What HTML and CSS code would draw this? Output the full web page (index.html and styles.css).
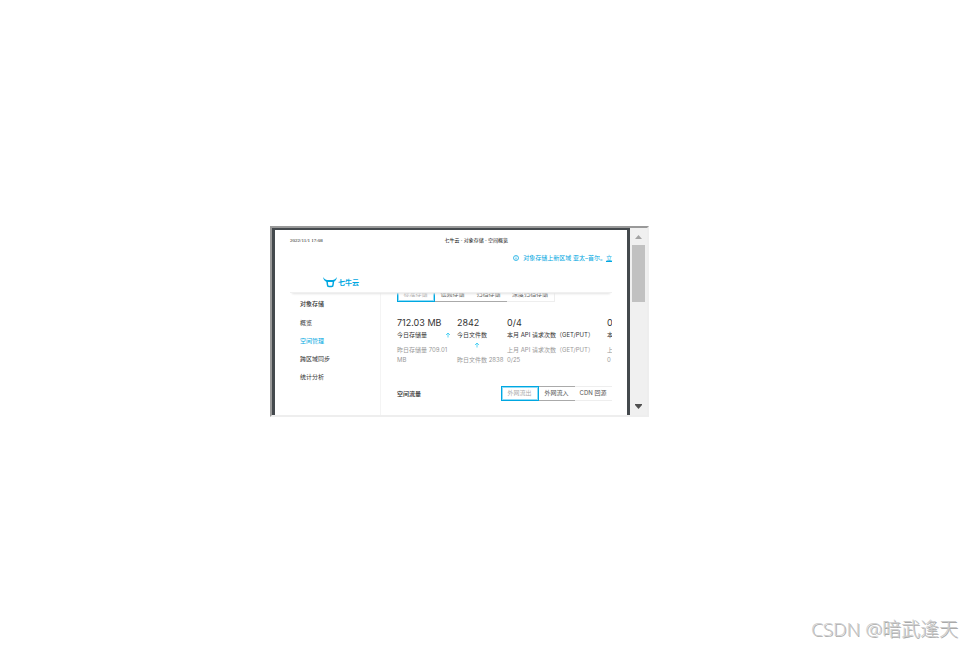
FILE: index.html
```html
<!DOCTYPE html>
<html lang="zh-CN">
<head>
<meta charset="utf-8">
<title>七牛云 - 对象存储 - 空间概览</title>
<link rel="stylesheet" href="styles.css">
</head>
<body>
<main class="stage">
  <div class="viewer">
    <div class="sheet">
      <div class="print-head">
        <time>2022/11/1 17:08</time>
        <span>七牛云 - 对象存储 - 空间概览</span>
      </div>
      <header class="top">
        <p class="notice">
          <svg class="notice-icon" viewBox="0 0 12 12"><circle cx="6" cy="6" r="5"/><path d="M6 5v4M6 3v1"/></svg>
          <span>对象存储上新区域 亚太–首尔。</span><a href="#">立</a>
        </p>
        <div class="brand">
          <svg class="brand-icon" viewBox="0 0 28 22"><path d="M0 0c3 5 7 6 11 6h6c4 0 8-1 11-6-1 6-4 9-9 10H9C4 9 1 6 0 0z"/><path class="face" d="M8 8l1 8q0 3 3 3h5q3 0 3-3l1-8"/></svg>
          <span>七牛云</span>
        </div>
      </header>
      <div class="body">
        <nav class="side">
          <h2>对象存储</h2>
          <a href="#">概览</a>
          <a href="#" class="current">空间管理</a>
          <a href="#">跨区域同步</a>
          <a href="#">统计分析</a>
        </nav>
        <section class="content">
          <div class="tabs tabs-cut">
            <button class="tab on">标准存储</button><button class="tab">低频存储</button><button class="tab">归档存储</button><button class="tab faint wide">深度归档存储</button>
          </div>
          <div class="stats">
            <div class="stat">
              <strong>712.03 MB</strong>
              <div class="label"><span>今日存储量</span><svg class="up" viewBox="0 0 12 12"><path d="M6 11V2M2 6l4-4 4 4"/></svg></div>
              <p>昨日存储量 709.01 MB</p>
            </div>
            <div class="stat">
              <strong>2842</strong>
              <div class="label stacked"><span>今日文件数</span><svg class="up" viewBox="0 0 12 12"><path d="M6 11V2M2 6l4-4 4 4"/></svg></div>
              <p class="single">昨日文件数 2838</p>
            </div>
            <div class="stat">
              <strong>0/4</strong>
              <div class="label"><span>本月 API 请求次数（GET/PUT）</span></div>
              <p>上月 API 请求次数（GET/PUT）<br>0/25</p>
            </div>
            <div class="stat">
              <strong>0</strong>
              <div class="label"><span>本</span></div>
              <p>上<br>0</p>
            </div>
          </div>
          <div class="traffic">
            <h3>空间流量</h3>
            <div class="tabs">
              <button class="tab on">外网流出</button><button class="tab">外网流入</button><button class="tab faint">CDN 回源</button>
            </div>
          </div>
        </section>
      </div>
    </div>
    <div class="scroll">
      <svg class="arrow" viewBox="0 0 17 17"><path d="M5 11h7L8.500 7z"/></svg>
      <div class="thumb"></div>
      <svg class="arrow down" viewBox="0 0 17 17"><path d="M5 6h7v1l-3.500 4L5 7z"/></svg>
    </div>
  </div>
</main>
<footer class="mark">CSDN @暗武逢天</footer>
</body>
</html>
```
FILE: styles.css
```css
* { box-sizing: border-box; }
body {
  margin: 0;
  min-height: 100vh;
  display: flex;
  flex-direction: column;
  background: #fff;
  color: #333;
  font: 6px/10px Inter, "Noto Sans CJK SC", sans-serif;
}
h2, h3, p { margin: 0; font-size: 6px; font-weight: 500; }
p { font-weight: 400; }
a { color: inherit; text-decoration: none; }
.stage { padding: 226px 0 0 270px; }
.viewer {
  display: flex;
  max-width: 379px;
  border: 2px solid;
  border-color: #999 #eee #eee #999;
  background: #f0f0f0;
}
.sheet {
  flex: 1;
  min-width: 0;
  background: #fff;
  border: solid #44494d;
  border-width: 2px 3px 0;
  padding: 6px 15px 0;
}
.print-head {
  display: grid;
  grid-template-columns: 48% 1fr;
  font: 5px/10px "Liberation Serif", "Noto Sans CJK SC", serif;
  color: #111;
}
.top {
  height: 47px;
  padding-top: 7px;
  border-bottom: 1px solid #f0f0f0;
  box-shadow: 0 3px 2px -2px #e4e4e4;
  color: #00a7e1;
  position: relative;
}
.notice { display: flex; justify-content: flex-end; align-items: center; white-space: nowrap; }
.notice a { text-decoration: underline; }
.notice-icon { width: 6px; height: 6px; margin-right: 4px; fill: none; stroke: currentColor; stroke-width: 1.500; }
.brand {
  display: flex;
  align-items: center;
  gap: 1px;
  margin: 14px 0 0 33px;
  font-size: 7px;
  font-weight: 700;
}
.brand-icon { width: 14px; height: 11px; fill: #00a7e1; }
.face { fill: none; stroke: #00a7e1; stroke-width: 3; }
.body { display: flex; height: 122px; overflow: hidden; }
.side {
  width: 91px;
  display: flex;
  flex-direction: column;
  gap: 8px;
  padding: 6px 0 0 10px;
  border-right: 1px solid #f4f4f4;
}
.side h2 { margin-bottom: 1px; }
.side .current { color: #00a7e1; }
.content {
  flex: 1;
  min-width: 0;
  margin-left: 6px;
  padding-left: 10px;
  overflow: hidden;
}
.tabs { display: flex; }
.tabs-cut { height: 9px; align-items: flex-end; overflow: hidden; }
.tab {
  width: 36px;
  height: 15px;
  padding: 0 1px 2px 0;
  flex: none;
  border: solid #aaa;
  border-width: 1px 0;
  background: #fff;
  color: #555;
  font: inherit;
  white-space: nowrap;
}
.tab.on { width: 38px; border: 1px solid #00a7e1; box-shadow: inset 0 0 0 1px #8edcf7; color: #aaa; }
.tab.faint { width: 37px; border-color: #eee; }
.tab.wide { width: 48px; border-right: 1px solid #eee; }
.stats {
  display: grid;
  grid-template-columns: 60px 50px 100px 1fr;
  margin-top: 16px;
}
.stat { min-width: 0; white-space: nowrap; }
.stat strong { display: block; font-size: 9px; font-weight: 400; margin-bottom: 2px; }
.label { display: flex; justify-content: space-between; padding-right: 6px; }
.stat p { margin-top: 5px; color: #999; white-space: normal; }
.stat:nth-child(3) p, .stat .single { white-space: nowrap; }
.stacked { flex-direction: column; }
.up { width: 6px; height: 10px; fill: none; stroke: #25c5f0; stroke-width: 1.500; }
.stacked .up { align-self: center; margin-right: 4px; }
.traffic { display: flex; align-items: center; justify-content: space-between; margin-top: 21px; }
.traffic h3 { color: #222; }
.scroll { width: 17px; display: flex; flex-direction: column; }
.arrow { width: 17px; height: 17px; fill: #a3a3a3; }
.down { margin-top: auto; fill: #505050; }
.thumb { height: 57px; margin: 0 2px; background: #c1c1c1; }
.mark {
  margin-top: auto;
  padding: 0 4px 6px 0;
  text-align: right;
  font: 300 19px/24px "Open Sans", "Noto Sans CJK SC", sans-serif;
  color: #ccc;
  text-shadow: 1px 1px 0 #aaa;
}
```
